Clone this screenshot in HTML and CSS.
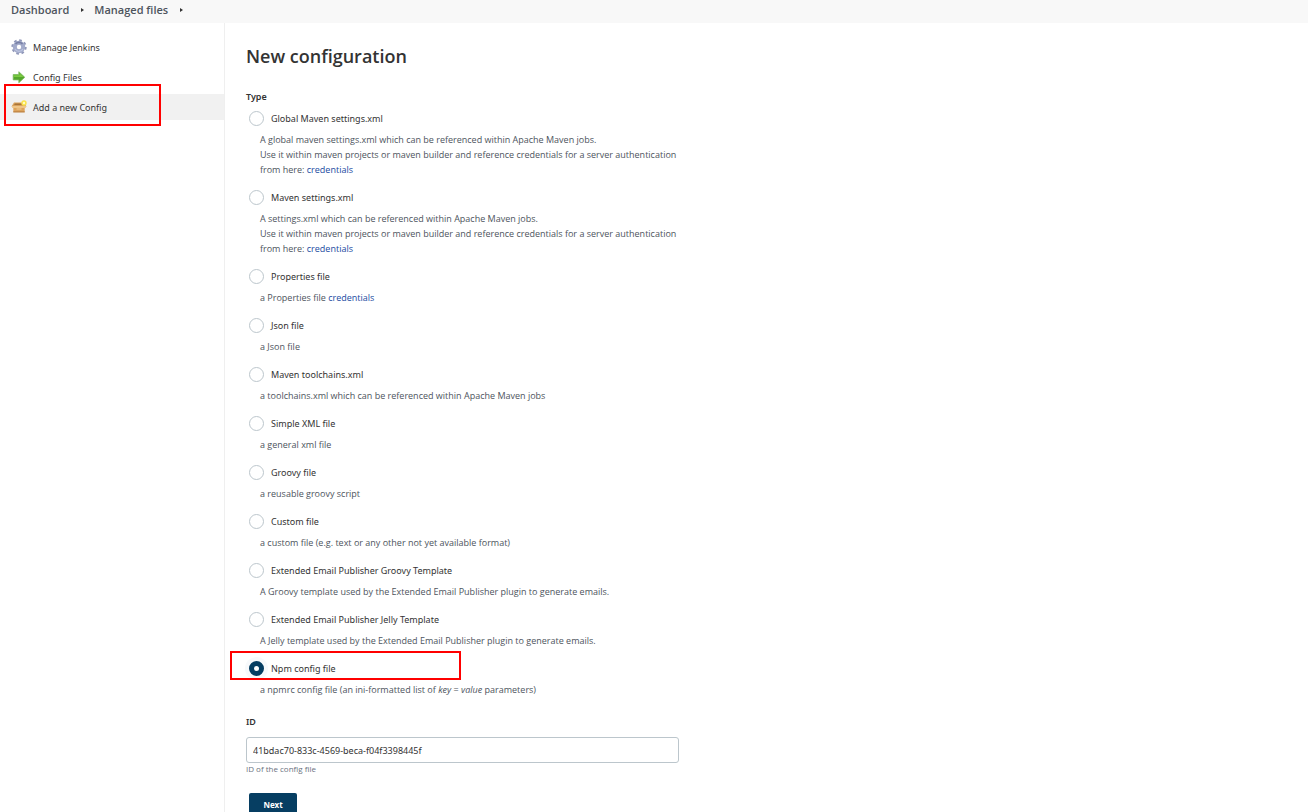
FILE: index.html
```html
<!DOCTYPE html>
<html lang="en">
<head>
    <meta charset="UTF-8">
    <meta name="viewport" content="width=device-width, initial-scale=1.0">
    <title>New configuration [Jenkins]</title>
    <link rel="stylesheet" href="styles.css">
</head>
<body>
    <nav class="breadcrumbs">
        <a href="#">Dashboard</a>
        <span class="arrow"></span>
        <a href="#">Managed files</a>
        <span class="arrow"></span>
    </nav>
    <div class="page">
        <aside class="side-panel">
            <a class="task" href="#">
                <svg class="icon" viewBox="0 0 16 16">
                    <circle cx="8" cy="8" r="6.6" fill="none" stroke="#9097b8" stroke-width="2.2" stroke-dasharray="2.6 2.584"/>
                    <circle cx="8" cy="8" r="4.2" fill="#fff" stroke="#a3abcb" stroke-width="4"/>
                    <path d="M4.500 5a4.600 4.600 0 0 1 7 0" fill="none" stroke="#7880a6" stroke-width="1.600"/>
                    <path d="M4 10a4.600 4.600 0 0 0 8 0" fill="none" stroke="#bcc4e0" stroke-width="1.200"/>
                </svg>
                Manage Jenkins
            </a>
            <a class="task" href="#">
                <svg class="icon" viewBox="0 0 16 16">
                    <path d="M2.200 5.500h5.600V2.700L13.800 8.300l-6 5.500v-2.900H2.200z" fill="#55a82c" stroke="#7fbd62" stroke-width=".8"/>
                    <path d="M2.800 6.200h5.700V4.300l4 3.700H2.800z" fill="#7ccb42"/>
                </svg>
                Config Files
            </a>
            <a class="task active" href="#">
                <svg class="icon" viewBox="0 0 16 16">
                    <path d="M3 3.500h10l2.500 4H.5z" fill="#d9a25c"/>
                    <path d="M4 4.500h7l1 1.500H3z" fill="#a8743a"/>
                    <path d="M.5 7.200h15l-1 1.800H1.500z" fill="#f0c584"/>
                    <path d="M2.300 9h11.400v4.200H2.300z" fill="#dda45c"/>
                    <path d="M2.300 12.400h11.400v1H2.300z" fill="#b57a3c"/>
                    <path d="M5.500 9.500h5v1h-5z" fill="#f3cf98"/>
                    <circle cx="13" cy="4" r="2.700" fill="#fbe34a"/>
                    <circle cx="13" cy="4" r="1.200" fill="#fffbc4"/>
                </svg>
                Add a new Config
                <span class="mark mark-task"></span>
            </a>
        </aside>
        <main class="main-panel">
            <h1>New configuration</h1>
            <form>
                <fieldset>
                    <legend>Type</legend>
                    <div class="option">
                        <label><input type="radio" name="type">Global Maven settings.xml</label>
                        <p>A global maven settings.xml which can be referenced within Apache Maven jobs.<br>
                        Use it within maven projects or maven builder and reference credentials for a server authentication<br>
                        from here: <a href="#">credentials</a></p>
                    </div>
                    <div class="option">
                        <label><input type="radio" name="type">Maven settings.xml</label>
                        <p>A settings.xml which can be referenced within Apache Maven jobs.<br>
                        Use it within maven projects or maven builder and reference credentials for a server authentication<br>
                        from here: <a href="#">credentials</a></p>
                    </div>
                    <div class="option">
                        <label><input type="radio" name="type">Properties file</label>
                        <p>a Properties file <a href="#">credentials</a></p>
                    </div>
                    <div class="option">
                        <label><input type="radio" name="type">Json file</label>
                        <p>a Json file</p>
                    </div>
                    <div class="option">
                        <label><input type="radio" name="type">Maven toolchains.xml</label>
                        <p>a toolchains.xml which can be referenced within Apache Maven jobs</p>
                    </div>
                    <div class="option">
                        <label><input type="radio" name="type">Simple XML file</label>
                        <p>a general xml file</p>
                    </div>
                    <div class="option">
                        <label><input type="radio" name="type">Groovy file</label>
                        <p>a reusable groovy script</p>
                    </div>
                    <div class="option">
                        <label><input type="radio" name="type">Custom file</label>
                        <p>a custom file (e.g. text or any other not yet available format)</p>
                    </div>
                    <div class="option">
                        <label><input type="radio" name="type">Extended Email Publisher Groovy Template</label>
                        <p>A Groovy template used by the Extended Email Publisher plugin to generate emails.</p>
                    </div>
                    <div class="option">
                        <label><input type="radio" name="type">Extended Email Publisher Jelly Template</label>
                        <p>A Jelly template used by the Extended Email Publisher plugin to generate emails.</p>
                    </div>
                    <div class="option">
                        <label><input type="radio" name="type" checked>Npm config file</label>
                        <p>a npmrc config file (an ini-formatted list of <i>key</i> = <i>value</i> parameters)</p>
                        <span class="mark mark-option"></span>
                    </div>
                </fieldset>
                <div class="field">
                    <label for="configId">ID</label>
                    <input type="text" id="configId" value="41bdac70-833c-4569-beca-f04f3398445f">
                    <div class="help">ID of the config file</div>
                </div>
                <button type="submit">Next</button>
            </form>
        </main>
    </div>
</body>
</html>
```

FILE: styles.css
```css
* {
    box-sizing: border-box;
}
body {
    margin: 0;
    min-height: 100vh;
    display: flex;
    flex-direction: column;
    background-color: #fff;
    color: #333;
    font-family: "Noto Sans", "Open Sans", sans-serif;
    font-size: 9px;
    line-height: 15px;
}
a {
    text-decoration: none;
}
.breadcrumbs {
    display: flex;
    align-items: center;
    height: 23px;
    padding: 0 11px 4px;
    background-color: #f8f8f8;
    font-family: "Open Sans", sans-serif;
    font-size: 11px;
    font-weight: 600;
}
.breadcrumbs a {
    color: #4d545d;
}
.arrow {
    margin: 0 10px 0 12px;
    border: 2px solid transparent;
    border-left: 3px solid #333;
    border-right: 0;
}
.page {
    display: flex;
    flex: 1;
}
.side-panel {
    display: flex;
    flex-direction: column;
    gap: 4px;
    width: 225px;
    padding-top: 11px;
    border-right: 1px solid #efefef;
}
.task {
    position: relative;
    display: flex;
    align-items: center;
    gap: 6px;
    height: 26px;
    padding-left: 11px;
    color: #333;
}
.task.active {
    background-color: #f1f1f1;
}
.icon {
    width: 16px;
    height: 16px;
}
/* red callout frames */
.mark {
    position: absolute;
    border: 2px solid #f00;
    pointer-events: none;
}
.mark-task {
    top: -10px;
    left: 4px;
    width: 157px;
    height: 42px;
}
.mark-option {
    top: -10px;
    left: -16px;
    width: 231px;
    height: 29px;
}
.main-panel {
    flex: 1;
    padding: 21px 21px 0;
}
h1 {
    margin: 0 0 21px;
    font-family: "Open Sans", sans-serif;
    font-size: 18px;
    line-height: 24px;
    font-weight: 600;
}
fieldset {
    margin: 0;
    padding: 0;
    border: 0;
}
legend, .field label {
    display: block;
    padding: 0;
    font-weight: 600;
    line-height: 15px;
}
legend {
    margin-bottom: 7px;
}
.option {
    position: relative;
    padding-bottom: 13px;
}
.option label {
    display: flex;
    align-items: center;
    gap: 7px;
    height: 15px;
    padding-left: 3px;
}
.option p {
    margin: 6px 0 0 14px;
    color: #4d545d;
    font-family: "Open Sans", sans-serif;
}
.option p a {
    color: #204a9f;
}
input[type="radio"] {
    appearance: none;
    width: 15px;
    height: 15px;
    margin: 0;
    border: 1px solid #bcc6cc;
    border-radius: 50%;
    background-color: #fff;
}
input[type="radio"]:checked {
    border: 5px solid #063e62;
    box-shadow: 0 0 0 4px #f7f9fb;
}
.field {
    max-width: 433px;
    padding-top: 4px;
}
input[type="text"] {
    display: block;
    width: 100%;
    height: 26px;
    margin-top: 8px;
    padding: 0 6px;
    border: 1px solid #bcc6cc;
    border-radius: 3px;
    color: #333;
    font-family: inherit;
    font-size: 9px;
}
.help {
    color: #6b7280;
    font-family: "Open Sans", sans-serif;
    font-size: 8px;
    line-height: 12px;
}
button {
    min-width: 48px;
    height: 22px;
    margin: 18px 0 0 3px;
    padding: 0 14px;
    border: 0;
    border-radius: 2px;
    background-color: #063e62;
    color: #fff;
    font-family: inherit;
    font-size: 8px;
    font-weight: 700;
}
```
